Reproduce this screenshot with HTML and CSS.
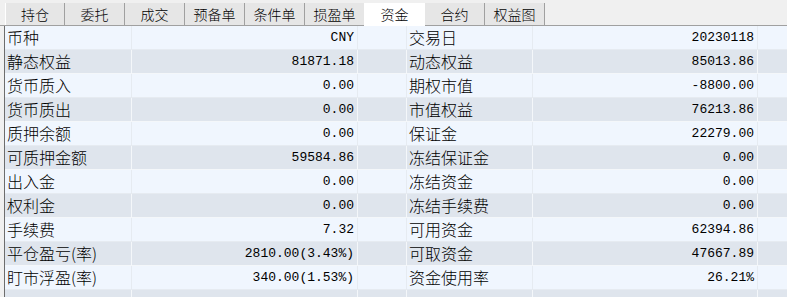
FILE: index.html
```html
<!DOCTYPE html>
<html lang="zh">
<head>
    <meta charset="UTF-8">
    <title>资金</title>
    <link rel="stylesheet" href="styles.css">
</head>
<body>
    <div class="tabs">
        <div class="tab">持仓</div>
        <div class="tab">委托</div>
        <div class="tab">成交</div>
        <div class="tab">预备单</div>
        <div class="tab">条件单</div>
        <div class="tab">损盈单</div>
        <div class="tab active">资金</div>
        <div class="tab">合约</div>
        <div class="tab">权益图</div>
    </div>

    <div class="grid">
        <div class="row">
            <div class="cell label">币种</div><div class="cell value">CNY</div><div class="cell gap"></div>
            <div class="cell label">交易日</div><div class="cell value wide">20230118</div><div class="cell rest"></div>
        </div>
        <div class="row">
            <div class="cell label">静态权益</div><div class="cell value">81871.18</div><div class="cell gap"></div>
            <div class="cell label">动态权益</div><div class="cell value wide">85013.86</div><div class="cell rest"></div>
        </div>
        <div class="row">
            <div class="cell label">货币质入</div><div class="cell value">0.00</div><div class="cell gap"></div>
            <div class="cell label">期权市值</div><div class="cell value wide">-8800.00</div><div class="cell rest"></div>
        </div>
        <div class="row">
            <div class="cell label">货币质出</div><div class="cell value">0.00</div><div class="cell gap"></div>
            <div class="cell label">市值权益</div><div class="cell value wide">76213.86</div><div class="cell rest"></div>
        </div>
        <div class="row">
            <div class="cell label">质押余额</div><div class="cell value">0.00</div><div class="cell gap"></div>
            <div class="cell label">保证金</div><div class="cell value wide">22279.00</div><div class="cell rest"></div>
        </div>
        <div class="row">
            <div class="cell label">可质押金额</div><div class="cell value">59584.86</div><div class="cell gap"></div>
            <div class="cell label">冻结保证金</div><div class="cell value wide">0.00</div><div class="cell rest"></div>
        </div>
        <div class="row">
            <div class="cell label">出入金</div><div class="cell value">0.00</div><div class="cell gap"></div>
            <div class="cell label">冻结资金</div><div class="cell value wide">0.00</div><div class="cell rest"></div>
        </div>
        <div class="row">
            <div class="cell label">权利金</div><div class="cell value">0.00</div><div class="cell gap"></div>
            <div class="cell label">冻结手续费</div><div class="cell value wide">0.00</div><div class="cell rest"></div>
        </div>
        <div class="row">
            <div class="cell label">手续费</div><div class="cell value">7.32</div><div class="cell gap"></div>
            <div class="cell label">可用资金</div><div class="cell value wide">62394.86</div><div class="cell rest"></div>
        </div>
        <div class="row">
            <div class="cell label">平仓盈亏(率)</div><div class="cell value">2810.00(3.43%)</div><div class="cell gap"></div>
            <div class="cell label">可取资金</div><div class="cell value wide">47667.89</div><div class="cell rest"></div>
        </div>
        <div class="row">
            <div class="cell label">盯市浮盈(率)</div><div class="cell value">340.00(1.53%)</div><div class="cell gap"></div>
            <div class="cell label">资金使用率</div><div class="cell value wide">26.21%</div><div class="cell rest"></div>
        </div>
        <div class="row tail">
            <div class="cell label"></div><div class="cell value"></div><div class="cell gap"></div>
            <div class="cell label"></div><div class="cell value wide"></div><div class="cell rest"></div>
        </div>
    </div>
</body>
</html>
```

FILE: styles.css
```css
* {
    margin: 0;
    padding: 0;
    box-sizing: border-box;
}

body {
    width: 787px;
    height: 297px;
    overflow: hidden;
    background-color: #f0f0f0;
    color: #000;
    font-family: "Noto Sans CJK SC", sans-serif;
    font-weight: 300;
}

/* Pasek zakładek */
.tabs {
    display: flex;
    height: 26px;
    padding: 3px 0 0 5px;
    border-bottom: 1px solid #a0a0a0;
}

.tab {
    width: 60px;
    height: 22px;
    background-color: #e6e6e6;
    border-right: 1px solid #a0a0a0;
    font-size: 14px;
    line-height: 22px;
    text-align: center;
}

.tab:first-child {
    border-left: 1px solid #ffffff;
}

.tab.active {
    height: 23px;
    background-color: #ffffff;
    border-right: none;
    margin-left: -1px;
    width: 61px;
}

/* Tabela z danymi */
.grid {
    margin-left: 4px;
    border-left: 1px solid #6d6d6d;
}

.row {
    display: flex;
    height: 24px;
    background-color: #f0f6fe;
    border-bottom: 1px solid #e6ebf1;
}

.row:nth-child(even) {
    background-color: #dfe5ed;
    border-bottom-color: #f4f7fa;
}

.row.tail {
    height: 7px;
    border-bottom: none;
}

.cell {
    height: 23px;
    border-right: 1px solid #e6ebf1;
    font-size: 16px;
    line-height: 23px;
    white-space: nowrap;
}

.tail .cell {
    height: 7px;
}

.row:nth-child(even) .cell {
    border-right-color: #f4f7fa;
}

.label {
    width: 127px;
    padding-left: 2px;
}

.label + .value + .gap + .label {
    width: 126px;
}

.value {
    width: 226px;
    padding-right: 3px;
    text-align: right;
    font-family: "Liberation Mono", monospace;
    font-size: 13px;
    font-weight: 400;
}

.value.wide {
    width: 225px;
}

.gap {
    width: 49px;
}

.rest {
    flex: 1;
    border-right: none;
}
```
